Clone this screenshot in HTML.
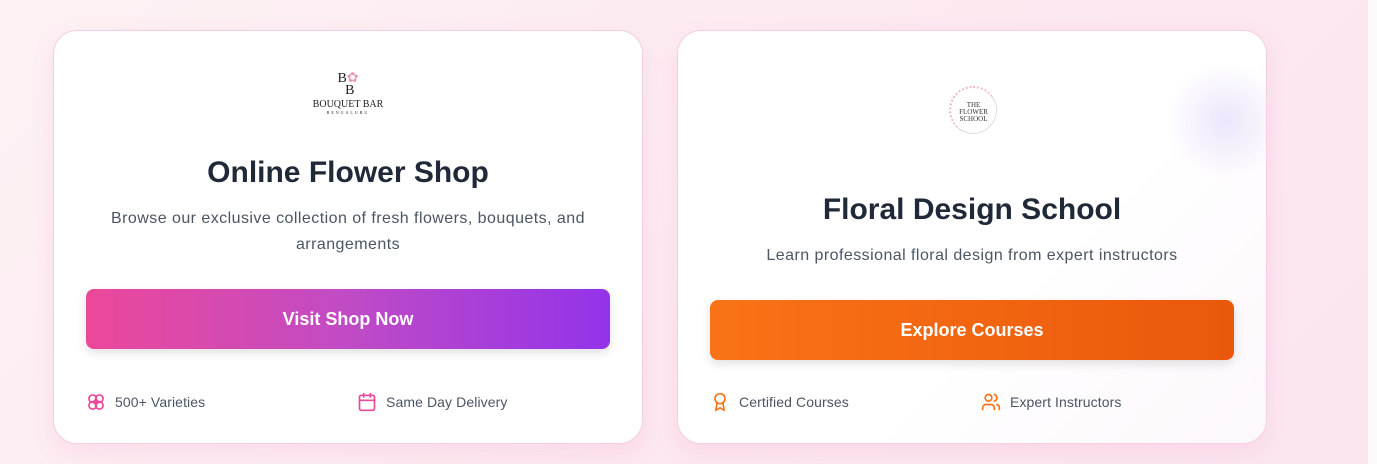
<!DOCTYPE html>
<html><head><style>
*{box-sizing:border-box;margin:0;padding:0}
body{width:1377px;height:464px;overflow:hidden;font-family:"Liberation Sans",sans-serif;background:linear-gradient(135deg,#fdf2f4 0%,#fce8f0 60%,#fbe6f0 100%);position:relative}
.sb{position:absolute;right:0;top:0;width:9px;height:464px;background:#fafafa}
.card{position:absolute;top:30px;width:590px;height:414px;border-radius:24px;background:#fff;border:1px solid #f5cfe0;box-shadow:0 8px 24px rgba(236,72,153,.10);text-align:center;overflow:hidden}
h2{font-size:30px;font-weight:bold;color:#1f2937;position:absolute;left:0;right:0}
p{font-size:16px;color:#4b5563;line-height:26px;position:absolute;left:30px;right:30px;letter-spacing:.45px}
.btn{position:absolute;left:32px;right:32px;height:60px;border-radius:8px;color:#fff;font-weight:bold;font-size:18px;line-height:60px;box-shadow:0 4px 10px rgba(0,0,0,.12)}
.f{position:absolute;top:361px;font-size:14px;color:#4b5563;display:flex;align-items:center;gap:9px;height:20px;letter-spacing:.1px}
.f svg{width:20px;height:20px;fill:none;stroke-width:2;stroke-linecap:round;stroke-linejoin:round}
</style></head><body>
<div class="card" style="left:53px">
 <div style="position:absolute;top:42px;left:0;right:0;font-family:'Liberation Serif',serif;color:#222">
  <div style="font-size:14px;line-height:12px">B<span style="color:#e79bb7">✿</span><br>&nbsp;B</div>
  <div style="font-size:10px;margin-top:2px">BOUQUET BAR</div>
  <div style="font-size:4px;letter-spacing:2px">BENGALURU</div>
 </div>
 <h2 style="top:125px">Online Flower Shop</h2>
 <p style="top:175px">Browse our exclusive collection of fresh flowers, bouquets, and arrangements</p>
 <div class="btn" style="top:258px;background:linear-gradient(90deg,#ec4899,#c04bc5 50%,#9333ea)">Visit Shop Now</div>
 <div class="f" style="left:32px"><svg viewBox="0 0 24 24" stroke="#ec4899"><circle cx="8" cy="8" r="4.5"/><circle cx="16" cy="8" r="4.5"/><circle cx="8" cy="16" r="4.5"/><circle cx="16" cy="16" r="4.5"/><circle cx="12" cy="12" r="2.5"/></svg>500+ Varieties</div>
 <div class="f" style="left:303px"><svg viewBox="0 0 24 24" stroke="#ec4899"><rect x="3" y="4" width="18" height="18" rx="2"/><path d="M16 2v4M8 2v4M3 10h18"/></svg>Same Day Delivery</div>
</div>
<div class="card" style="left:677px;background:linear-gradient(135deg,#fff 60%,#fdf7fb)">
 <div style="position:absolute;right:-20px;top:30px;width:120px;height:120px;border-radius:50%;background:radial-gradient(#ece6fb,rgba(255,255,255,0) 70%)"></div>
 <div style="position:absolute;top:55px;left:271px;width:48px;height:48px;border-radius:50%;border:1px solid #ddd;border-top:2px dotted #f0b5c8;border-left:2px dotted #f0b5c8;font-family:'Liberation Serif',serif;font-size:7px;line-height:7px;color:#333;padding-top:14px">THE<br>FLOWER<br>SCHOOL</div>
 <h2 style="top:162px">Floral Design School</h2>
 <p style="top:212px">Learn professional floral design from expert instructors</p>
 <div class="btn" style="top:269px;background:linear-gradient(90deg,#f97316,#ea580c)">Explore Courses</div>
 <div class="f" style="left:32px"><svg viewBox="0 0 24 24" stroke="#f97316"><circle cx="12" cy="8" r="6"/><path d="M15.5 12.9 17 22l-5-3-5 3 1.5-9.1"/></svg>Certified Courses</div>
 <div class="f" style="left:303px"><svg viewBox="0 0 24 24" stroke="#f97316"><path d="M16 21v-2a4 4 0 0 0-4-4H6a4 4 0 0 0-4 4v2"/><circle cx="9" cy="7" r="4"/><path d="M22 21v-2a4 4 0 0 0-3-3.87M16 3.13a4 4 0 0 1 0 7.75"/></svg>Expert Instructors</div>
</div>
<div class="sb"></div>
</body></html>
